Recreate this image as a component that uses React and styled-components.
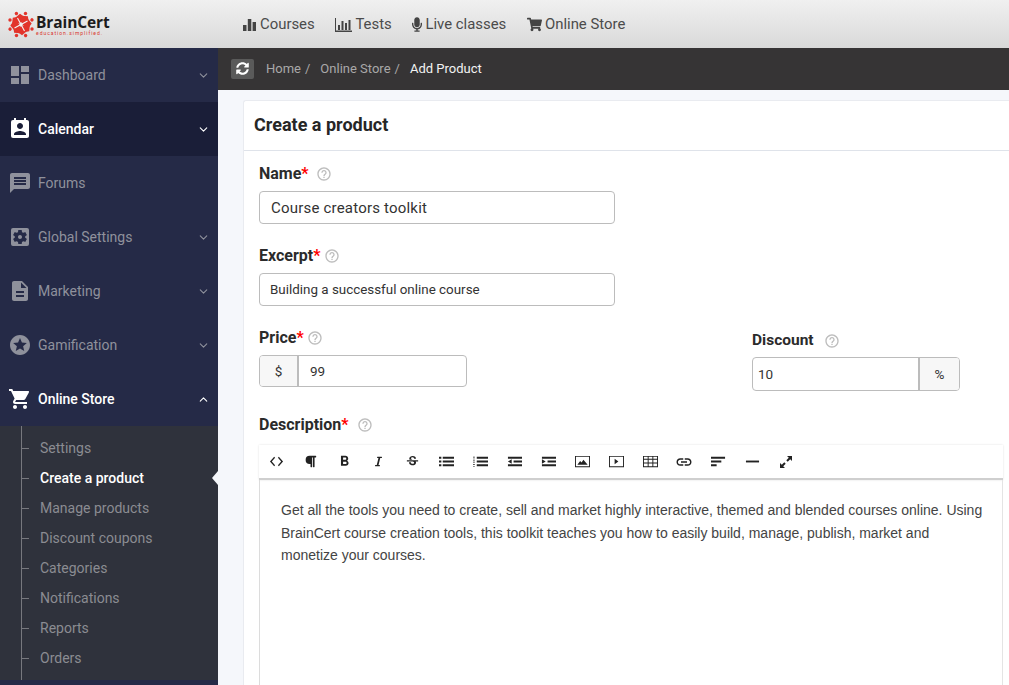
import React from 'react';
import styled, { createGlobalStyle } from 'styled-components';
import { FaMicrophone, FaShoppingCart, FaSyncAlt, FaParagraph, FaItalic } from 'react-icons/fa';
import { FiChevronDown, FiChevronUp } from 'react-icons/fi';
import { MdDashboard, MdPermContactCalendar, MdMessage, MdSettingsApplications, MdDescription, MdStars, MdShoppingCart, MdHelpOutline, MdFormatBold, MdStrikethroughS, MdLink } from 'react-icons/md';

const GlobalStyle = createGlobalStyle`
  html, body { margin: 0; padding: 0; height: 100%; overflow: hidden; }
  body { font-family: Roboto, "Liberation Sans", sans-serif; background: #f5f7fb; }
  * { box-sizing: border-box; }
`;

const Page = styled.div`
  width: 1009px;
  height: 685px;
  overflow: hidden;
  display: flex;
  flex-direction: column;
`;

const TopBar = styled.header`
  height: 48px;
  flex: none;
  display: flex;
  align-items: center;
  background: linear-gradient(#f0f0f0, #d9d9d9);
`;

const Logo = styled.div`
  width: 242px;
  padding-left: 7px;
  display: flex;
  align-items: center;
  gap: 1px;
`;

const LogoText = styled.div`
  display: flex;
  flex-direction: column;
  gap: 1px;
  margin-top: 1px;
`;

const LogoName = styled.span`
  font-family: "Open Sans", sans-serif;
  font-size: 15.5px;
  line-height: 16px;
  font-weight: 700;
  color: #1c1c1c;
  letter-spacing: -0.1px;
`;

const LogoTag = styled.span`
  font-size: 5px;
  line-height: 5px;
  color: #d9342b;
  letter-spacing: 0.98px;
  white-space: nowrap;
`;

const TopNav = styled.nav`
  display: flex;
  gap: 20.7px;
`;

const TopLink = styled.a`
  display: flex;
  align-items: center;
  gap: 3px;
  font-size: 14.9px;
  color: #4b4b4b;
  svg { width: ${p => p.$icon || 15}px; height: 15px; fill: #444; }
`;

const Body = styled.div`
  flex: 1;
  display: flex;
  min-height: 0;
`;

const Sidebar = styled.aside`
  width: 218px;
  flex: none;
  background: #252a47;
`;

const MenuItem = styled.div`
  height: 54px;
  display: flex;
  align-items: center;
  padding: 0 8px 0 10px;
  gap: 8px;
  font-size: 14px;
  font-weight: ${p => (p.$active ? 500 : 400)};
  color: ${p => (p.$active ? '#fff' : '#8f919c')};
  background: ${p => (p.$dark ? '#1a1e38' : 'transparent')};
`;

const MenuIcon = styled.span`
  width: 20px;
  height: 20px;
  display: flex;
  align-items: center;
  justify-content: center;
  svg { width: 24px; height: 24px; fill: ${p => (p.$active ? '#fff' : '#8f919c')}; flex: none; }
`;

const MenuLabel = styled.span`
  flex: 1;
`;

const Chevron = styled.span`
  display: flex;
  svg { width: 13px; height: 13px; color: ${p => (p.$active ? '#fff' : '#8f919c')}; }
`;

const SubMenu = styled.ul`
  position: relative;
  list-style: none;
  margin: 0;
  padding: 7px 0 8px;
  height: 254px;
  background: #2f323c;
  &::before {
    content: '';
    position: absolute;
    left: 21px;
    top: 0;
    bottom: 0;
    width: 1px;
    background: #77787e;
  }
`;

const SubItem = styled.li`
  position: relative;
  height: 30px;
  line-height: 30px;
  padding-left: 40px;
  font-size: 14px;
  font-weight: ${p => (p.$active ? 500 : 400)};
  color: ${p => (p.$active ? '#fff' : '#8b8c92')};
  &::before {
    content: '';
    position: absolute;
    left: 22px;
    top: 15px;
    width: 7px;
    height: 1px;
    background: #77787e;
  }
  ${p => p.$active && `
    &::after {
      content: '';
      position: absolute;
      right: 0;
      top: 8px;
      border: 7px solid transparent;
      border-right-color: #f5f7fb;
      border-left-width: 0;
      border-right-width: 6px;
    }
  `}
`;

const Main = styled.main`
  flex: 1;
  min-width: 0;
  display: flex;
  flex-direction: column;
`;

const Breadcrumb = styled.div`
  height: 42px;
  flex: none;
  display: flex;
  align-items: center;
  padding: 0 0 1px 13px;
  background: #363435;
  font-size: 13px;
  color: #a9a8a8;
`;

const Refresh = styled.span`
  width: 23px;
  height: 20px;
  margin-right: 12px;
  border-radius: 2px;
  background: #5a5a5a;
  display: flex;
  align-items: center;
  justify-content: center;
  svg { width: 13px; height: 13px; fill: #fff; }
`;

const Crumb = styled.span`
  color: ${p => (p.$current ? '#f2f2f2' : '#a9a8a8')};
`;

const Separator = styled.span`
  margin: 0 10px 0 4px;
`;

const Content = styled.div`
  flex: 1;
  min-height: 0;
  padding: 10px 0 0 25px;
`;

const Card = styled.section`
  height: 100%;
  background: #fff;
  border: 1px solid #e9ebf0;
  border-right: 0;
  border-bottom: 0;
  border-radius: 3px 0 0 0;
`;

const CardTitle = styled.h2`
  margin: 0;
  height: 50px;
  padding: 0 0 2px 10px;
  display: flex;
  align-items: center;
  font-size: 18px;
  font-weight: 700;
  color: #262626;
  border-bottom: 1px solid #dfe3ea;
`;

const Form = styled.div`
  padding: 12px 6px 0 15px;
`;

const Field = styled.div`
  margin-bottom: ${p => p.$mb || 0}px;
  padding-top: ${p => p.$pt || 0}px;
`;

const LabelRow = styled.div`
  height: 20px;
  display: flex;
  align-items: center;
  gap: ${p => p.$gap}px;
  margin-bottom: ${p => p.$mb || 8}px;
  font-size: ${p => p.$fs || 16}px;
  font-weight: 700;
  color: #2b2b2b;
  svg { width: 16px; height: 16px; fill: #bdbdbd; margin-top: 2px; }
`;

const Star = styled.span`
  color: #f00;
`;

const TextBox = styled.div`
  width: 356px;
  height: 33px;
  padding-left: ${p => p.$pl}px;
  display: flex;
  align-items: center;
  border: 1px solid #bcbcbc;
  border-radius: 4px;
  font-size: ${p => p.$fs}px;
  letter-spacing: ${p => p.$ls || 0}px;
  color: #333;
`;

const PriceRow = styled.div`
  display: flex;
  justify-content: space-between;
  width: 701px;
  margin-bottom: 23px;
`;

const InputGroup = styled.div`
  display: flex;
  width: 208px;
  height: ${p => p.$h}px;
  border: 1px solid #bcbcbc;
  border-radius: 4px;
  overflow: hidden;
  font-size: 13.5px;
  color: #333;
`;

const Addon = styled.span`
  width: ${p => p.$w}px;
  flex: none;
  display: flex;
  align-items: center;
  justify-content: center;
  background: #f7f7f7;
  border-${p => p.$side}: 2px solid #bcbcbc;
`;

const GroupValue = styled.span`
  flex: 1;
  display: flex;
  align-items: center;
  padding-left: ${p => p.$pl}px;
`;

const Toolbar = styled.div`
  height: 35px;
  width: 744px;
  display: flex;
  align-items: center;
  background: #fff;
  box-shadow: 0 0 2px rgba(0, 0, 0, 0.12);
  border-bottom: 2px solid #cfcfcf;
  svg { fill: #222; }
`;

const ToolButton = styled.span`
  width: 34px;
  height: 16px;
  flex: none;
  display: flex;
  justify-content: center;
  align-items: center;
  svg { width: ${p => p.$s || 15}px; height: ${p => p.$s || 15}px; }
`;

const Editor = styled.div`
  width: 744px;
  height: 300px;
  padding: 19px 18px 0 21px;
  border-left: 1px solid #dcdcdc;
  border-right: 1px solid #e4e4e4;
  font-family: "Liberation Sans", Arial, sans-serif;
  font-size: 14px;
  line-height: 22.5px;
  color: #444;
`;

const menu = [
  { label: 'Dashboard', icon: <MdDashboard />, chevron: true },
  { label: 'Calendar', icon: <MdPermContactCalendar />, chevron: true, active: true, dark: true },
  { label: 'Forums', icon: <MdMessage /> },
  { label: 'Global Settings', icon: <MdSettingsApplications />, chevron: true },
  { label: 'Marketing', icon: <MdDescription />, chevron: true },
  { label: 'Gamification', icon: <MdStars />, chevron: true },
];

const subItems = ['Settings', 'Create a product', 'Manage products', 'Discount coupons', 'Categories', 'Notifications', 'Reports', 'Orders'];

const BarsIcon = () => (
  <svg viewBox="0 0 15 15"><path d="M1 8h3.500v6H1zM5.800 2h3.500v12H5.800zM10.600 5H14v9h-3.400z" /></svg>
);
const ChartIcon = () => (
  <svg viewBox="0 0 17 15"><path d="M0 1h1v12.500h17V15H0zM3 8h2v5H3zM6.500 4h2v9h-2zM10 6h2v7h-2zM13.500 3h2v10h-2z" /></svg>
);
const LogoMark = () => (
  <svg width="28" height="27" viewBox="0 0 28 27">
    <g fill="#e2342b">
      {[0, 45, 90, 135, 180, 225, 270, 315].map(a => (
        <g key={a} transform={`rotate(${a} 14 13.500)`}>
          <path d="M14 12 8.500 6.500 13 2.800l5.500 4z" />
          <circle cx="18.500" cy="2.500" r="1.700" />
        </g>
      ))}
    </g>
    <g stroke="#f3f3f3" strokeWidth="1.100" fill="none">
      {[0, 90, 180, 270].map(a => (
        <path key={a} d="M14 13.500 10.500 7" transform={`rotate(${a} 14 13.500)`} />
      ))}
    </g>
  </svg>
);
const CodeIcon = () => (
  <svg viewBox="0 0 16 12"><path d="M5.500 1 1 6l4.500 5 1-1L3 6l3.500-4zM10.500 1l-1 1L13 6l-3.500 4 1 1L15 6z" /></svg>
);
const BulletIcon = () => (
  <svg viewBox="0 0 16 12"><path d="M0 1h2.500v2H0zM0 5h2.500v2H0zM0 9h2.500v2H0zM4 1h12v2H4zM4 5h12v2H4zM4 9h12v2H4z" /></svg>
);
const NumberIcon = () => (
  <svg viewBox="0 0 16 12"><path d="M0 1h2v.8H0zM0 3h2v.6H0zM0 5h2v.8H0zM0 7h2v.6H0zM0 9h2v.8H0zM0 11h2v.6H0zM4 1h12v2H4zM4 5h12v2H4zM4 9h12v2H4z" /></svg>
);
const OutdentIcon = () => (
  <svg viewBox="0 0 16 12"><path d="M1 1h15v2H1zM7 5h9v2H7zM1 9h15v2H1zM5 3.500v5L1 6z" /></svg>
);
const IndentIcon = () => (
  <svg viewBox="0 0 16 12"><path d="M1 1h15v2H1zM7 5h9v2H7zM1 9h15v2H1zM1 3.500v5L5 6z" /></svg>
);
const ImageIcon = () => (
  <svg viewBox="0 0 16 12"><path d="M0 0h16v12H0zm1 1v10h14V1zm1.500 8.500 3-4 1.500 1.500 2-3 4.500 5.500z" fillRule="evenodd" /></svg>
);
const VideoIcon = () => (
  <svg viewBox="0 0 16 12"><path d="M0 0h16v12H0zm1 1v10h14V1zM6 3l4 3-4 3z" fillRule="evenodd" /></svg>
);
const TableIcon = () => (
  <svg viewBox="0 0 16 12"><path d="M0 0h16v12H0zm1 1v2h4V1zm5 0v2h4V1zm5 0v2h4V1zM1 4v3h4V4zm5 0v3h4V4zm5 0v3h4V4zM1 8v3h4V8zm5 0v3h4V8zm5 0v3h4V8z" fillRule="evenodd" /></svg>
);
const AlignIcon = () => (
  <svg viewBox="0 0 16 12"><path d="M0 1h15v2H0zM0 5h11v2H0zM0 9h6v2H0z" /></svg>
);
const RuleIcon = () => (
  <svg viewBox="0 0 16 12"><path d="M1 5h14v2H1z" /></svg>
);
const ExpandIcon = () => (
  <svg viewBox="0 0 14 14"><path d="M8 1h5v5l-1.800-1.800-2.500 2.500-1.400-1.400 2.500-2.500zM6 13H1V8l1.800 1.800 2.500-2.500 1.400 1.400-2.500 2.500z" /></svg>
);

const Help = () => <MdHelpOutline />;

function App() {
  return (
    <Page>
      <GlobalStyle />
      <TopBar>
        <Logo>
          <LogoMark />
          <LogoText>
            <LogoName>BrainCert</LogoName>
            <LogoTag>education.simplified.</LogoTag>
          </LogoText>
        </Logo>
        <TopNav>
          <TopLink><BarsIcon />Courses</TopLink>
          <TopLink $icon={17}><ChartIcon />Tests</TopLink>
          <TopLink $icon={10}><FaMicrophone />Live classes</TopLink>
          <TopLink><FaShoppingCart />Online Store</TopLink>
        </TopNav>
      </TopBar>
      <Body>
        <Sidebar>
          {menu.map(item => (
            <MenuItem key={item.label} $active={item.active} $dark={item.dark}>
              <MenuIcon $active={item.active}>{item.icon}</MenuIcon>
              <MenuLabel>{item.label}</MenuLabel>
              {item.chevron && <Chevron $active={item.active}><FiChevronDown /></Chevron>}
            </MenuItem>
          ))}
          <MenuItem $active>
            <MenuIcon $active><MdShoppingCart /></MenuIcon>
            <MenuLabel>Online Store</MenuLabel>
            <Chevron $active><FiChevronUp /></Chevron>
          </MenuItem>
          <SubMenu>
            {subItems.map(s => (
              <SubItem key={s} $active={s === 'Create a product'}>{s}</SubItem>
            ))}
          </SubMenu>
        </Sidebar>
        <Main>
          <Breadcrumb>
            <Refresh><FaSyncAlt /></Refresh>
            <Crumb>Home</Crumb>
            <Separator>/</Separator>
            <Crumb>Online Store</Crumb>
            <Separator>/</Separator>
            <Crumb $current>Add Product</Crumb>
          </Breadcrumb>
          <Content>
            <Card>
              <CardTitle>Create a product</CardTitle>
              <Form>
                <Field $mb={21}>
                  <LabelRow $gap={7}><span>Name<Star>*</Star></span><Help /></LabelRow>
                  <TextBox $pl={11} $fs={15} $ls={0.2}>Course creators toolkit</TextBox>
                </Field>
                <Field $mb={21}>
                  <LabelRow $gap={3}><span>Excerpt<Star>*</Star></span><Help /></LabelRow>
                  <TextBox $pl={10} $fs={13.4}>Building a successful online course</TextBox>
                </Field>
                <PriceRow>
                  <Field>
                    <LabelRow $gap={3}><span>Price<Star>*</Star></span><Help /></LabelRow>
                    <InputGroup $h={32}>
                      <Addon $w={39} $side="right">$</Addon>
                      <GroupValue $pl={11}>99</GroupValue>
                    </InputGroup>
                  </Field>
                  <Field $pt={3}>
                    <LabelRow $gap={10} $fs={15.5} $mb={7}><span>Discount</span><Help /></LabelRow>
                    <InputGroup $h={34}>
                      <GroupValue $pl={5}>10</GroupValue>
                      <Addon $w={41} $side="left">%</Addon>
                    </InputGroup>
                  </Field>
                </PriceRow>
                <LabelRow $gap={8} $mb={11}><span>Description<Star>*</Star></span><Help /></LabelRow>
                <Toolbar>
                  <ToolButton><CodeIcon /></ToolButton>
                  <ToolButton $s={13}><FaParagraph /></ToolButton>
                  <ToolButton $s={17}><MdFormatBold /></ToolButton>
                  <ToolButton $s={11}><FaItalic /></ToolButton>
                  <ToolButton $s={15}><MdStrikethroughS /></ToolButton>
                  <ToolButton><BulletIcon /></ToolButton>
                  <ToolButton><NumberIcon /></ToolButton>
                  <ToolButton><OutdentIcon /></ToolButton>
                  <ToolButton><IndentIcon /></ToolButton>
                  <ToolButton><ImageIcon /></ToolButton>
                  <ToolButton><VideoIcon /></ToolButton>
                  <ToolButton><TableIcon /></ToolButton>
                  <ToolButton $s={18}><MdLink /></ToolButton>
                  <ToolButton><AlignIcon /></ToolButton>
                  <ToolButton><RuleIcon /></ToolButton>
                  <ToolButton $s={14}><ExpandIcon /></ToolButton>
                </Toolbar>
                <Editor>
                  Get all the tools you need to create, sell and market highly interactive, themed and blended courses online. Using BrainCert course creation tools, this toolkit teaches you how to easily build, manage, publish, market and monetize your courses.
                </Editor>
              </Form>
            </Card>
          </Content>
        </Main>
      </Body>
    </Page>
  );
}

export default App;
